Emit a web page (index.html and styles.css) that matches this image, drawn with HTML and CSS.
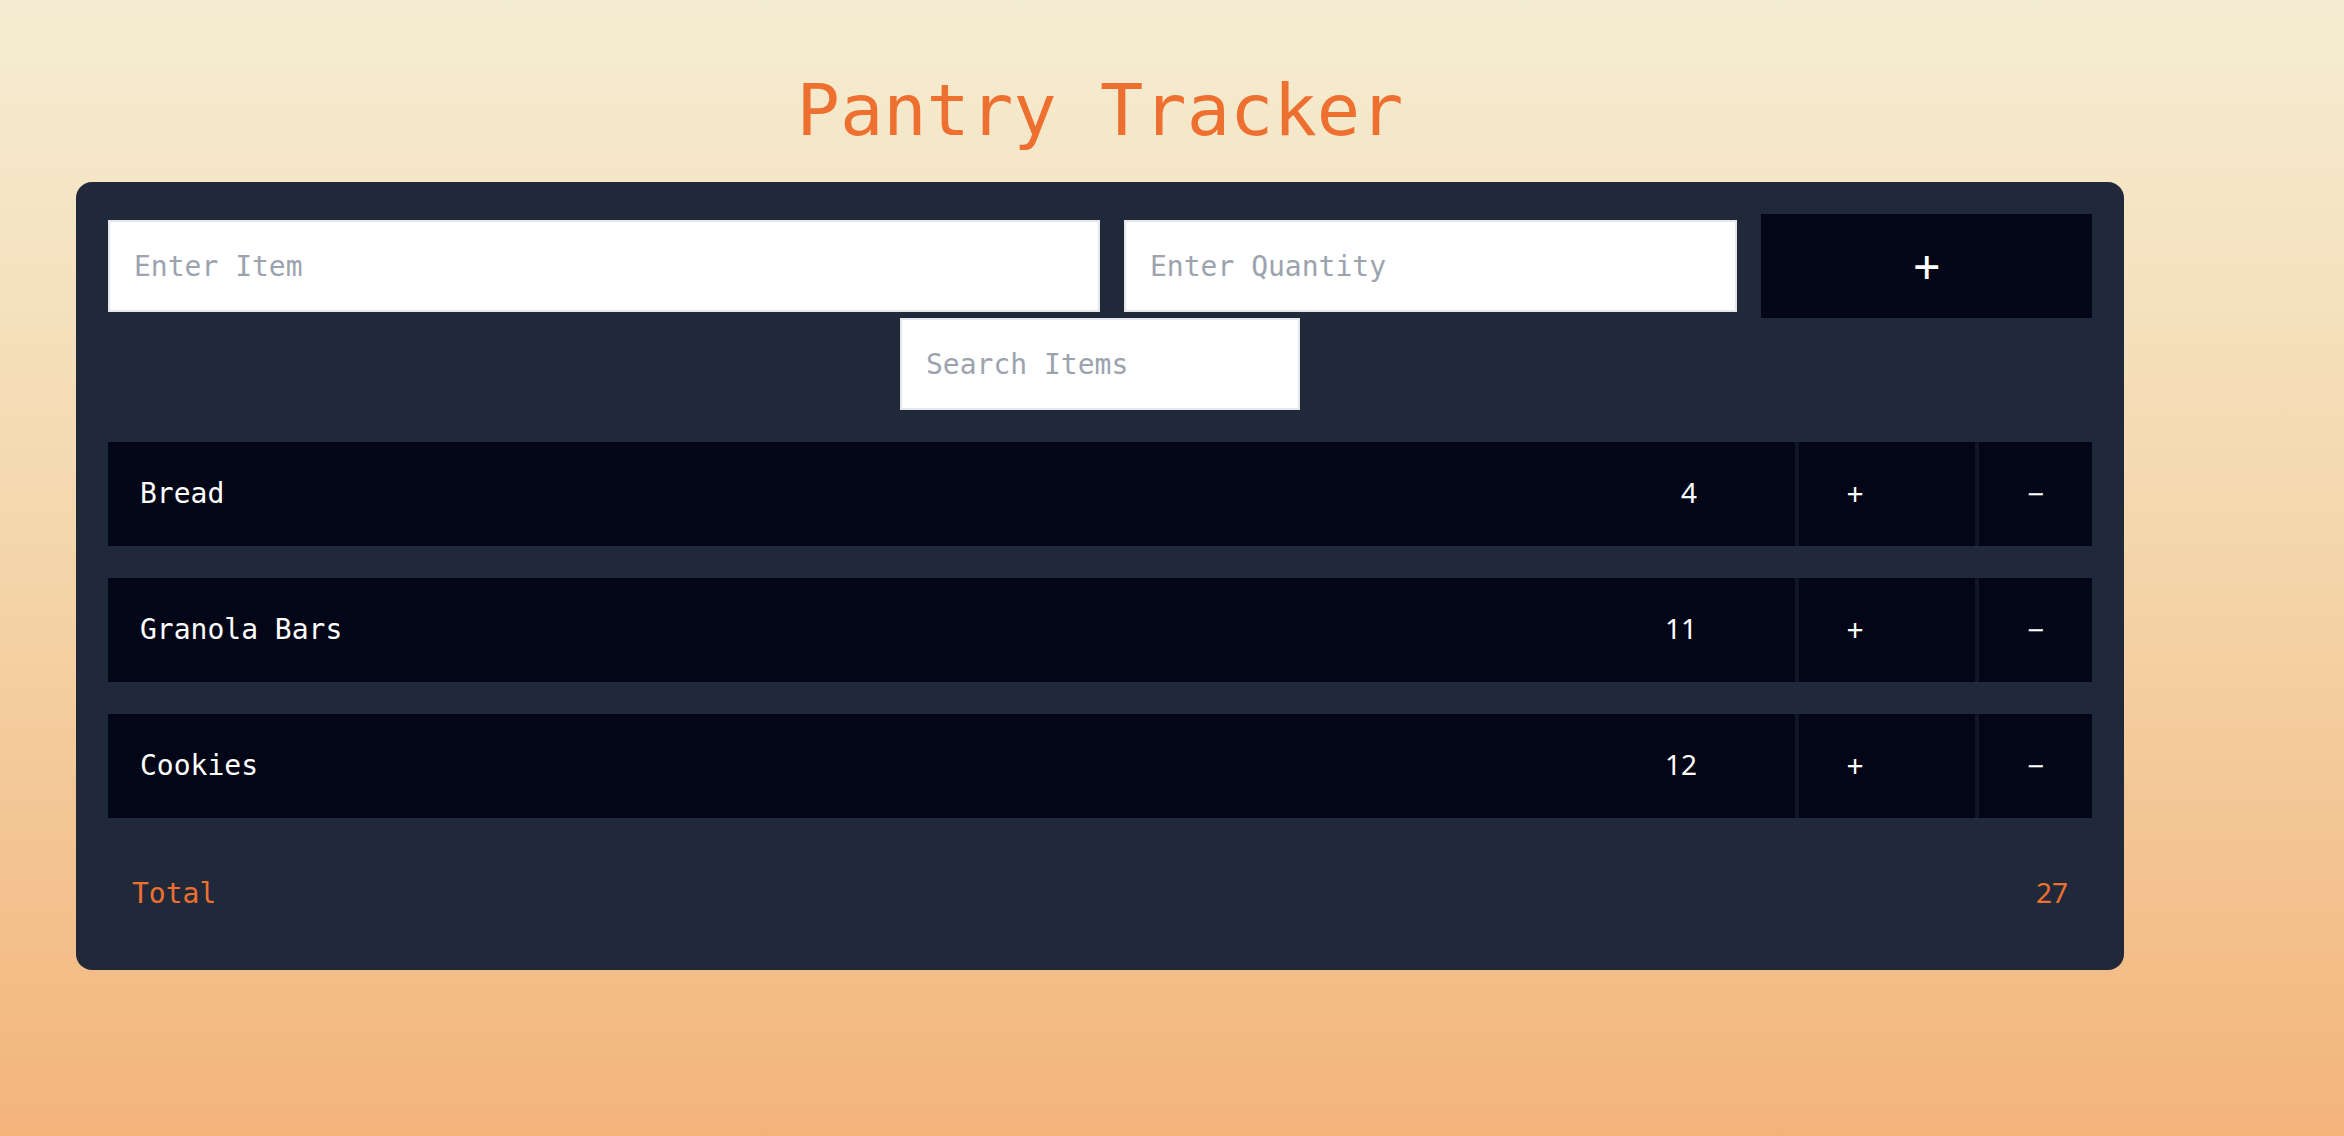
FILE: index.html
```html
<!DOCTYPE html>
<html lang="en">
<head>
<meta charset="utf-8">
<title>Pantry Tracker</title>
<link rel="stylesheet" href="styles.css">
</head>
<body>
<main class="page">
  <div class="container">
    <h1 class="title">Pantry Tracker</h1>
    <div class="card">
      <form class="add-form">
        <input class="field field-item" type="text" placeholder="Enter Item">
        <input class="field field-qty" type="text" placeholder="Enter Quantity">
        <button class="add-btn" type="button">+</button>
      </form>
      <div class="search-row">
        <input class="field search" type="text" placeholder="Search Items">
      </div>
      <ul class="items">
        <li class="item">
          <div class="item-main"><span class="name">Bread</span><span class="qty">4</span></div>
          <button class="inc" type="button">+</button>
          <button class="dec" type="button">−</button>
        </li>
        <li class="item">
          <div class="item-main"><span class="name">Granola Bars</span><span class="qty">11</span></div>
          <button class="inc" type="button">+</button>
          <button class="dec" type="button">−</button>
        </li>
        <li class="item">
          <div class="item-main"><span class="name">Cookies</span><span class="qty">12</span></div>
          <button class="inc" type="button">+</button>
          <button class="dec" type="button">−</button>
        </li>
      </ul>
      <div class="total">
        <span class="total-label">Total</span>
        <span class="total-val">27</span>
      </div>
    </div>
  </div>
</main>
</body>
</html>
```

FILE: styles.css
```css
* {
  box-sizing: border-box;
}

html, body {
  margin: 0;
  padding: 0;
}

body {
  min-height: 1136px;
  background: linear-gradient(to bottom, #f5edd3 0%, #f4d8ae 45%, #f3b47a 100%);
  font-family: "DejaVu Sans Mono", "Liberation Mono", monospace;
  font-size: 28px;
  line-height: 40px;
}

.page {
  padding: 38px 0 0 76px;
}

.container {
  width: 2048px;
}

.title {
  margin: 0;
  padding: 32px;
  text-align: center;
  font-weight: normal;
  font-size: 72px;
  line-height: 80px;
  color: #ee7030;
}

.card {
  background: #1f293a;
  border-radius: 16px;
  padding: 32px;
}

.add-form {
  display: grid;
  grid-template-columns: repeat(6, 1fr);
  align-items: center;
  margin: 0;
}

.field {
  display: block;
  height: 92px;
  padding: 24px;
  border: 2px solid #e5e7eb;
  background: #ffffff;
  color: #000000;
  font-family: "DejaVu Sans Mono", "Liberation Mono", monospace;
  font-size: 28px;
  line-height: 40px;
  outline: none;
  border-radius: 0;
}

.field::placeholder {
  color: #9ca3af;
}

.field-item {
  grid-column: span 3;
  width: 100%;
}

.field-qty {
  grid-column: span 2;
  margin: 0 24px;
  width: calc(100% - 48px);
}

.add-btn {
  grid-column: span 1;
  height: 104px;
  border: none;
  background: #020617;
  color: #ffffff;
  font-family: "DejaVu Sans Mono", monospace;
  font-size: 44px;
  line-height: 56px;
  padding: 24px;
  cursor: pointer;
}

.search-row {
  display: flex;
  justify-content: center;
}

.search {
  width: 400px;
}

.items {
  list-style: none;
  margin: 0;
  padding: 0;
}

.item {
  display: flex;
  height: 104px;
  margin: 32px 0;
  background: #020617;
  color: #ffffff;
}

.item-main {
  flex: 1;
  display: flex;
  justify-content: space-between;
  align-items: baseline;
  height: 104px;
  padding: 32px 98px 32px 32px;
}

.name {
  line-height: 40px;
}

.qty,
.total-val {
  font-family: "Noto Sans", "Open Sans", sans-serif;
  line-height: 32px;
}

.inc,
.dec {
  height: 104px;
  border: none;
  border-left: 4px solid #0f1626;
  background: #020617;
  color: #ffffff;
  font-family: "Noto Sans", "Open Sans", sans-serif;
  font-size: 30px;
  line-height: 40px;
  text-align: center;
  cursor: pointer;
}

.inc {
  width: 180px;
  padding: 32px 64px 32px 0;
}

.dec {
  width: 117px;
  padding: 32px 0;
}

.total {
  display: flex;
  justify-content: space-between;
  align-items: baseline;
  height: 88px;
  padding: 24px;
  color: #ee7030;
}
```
